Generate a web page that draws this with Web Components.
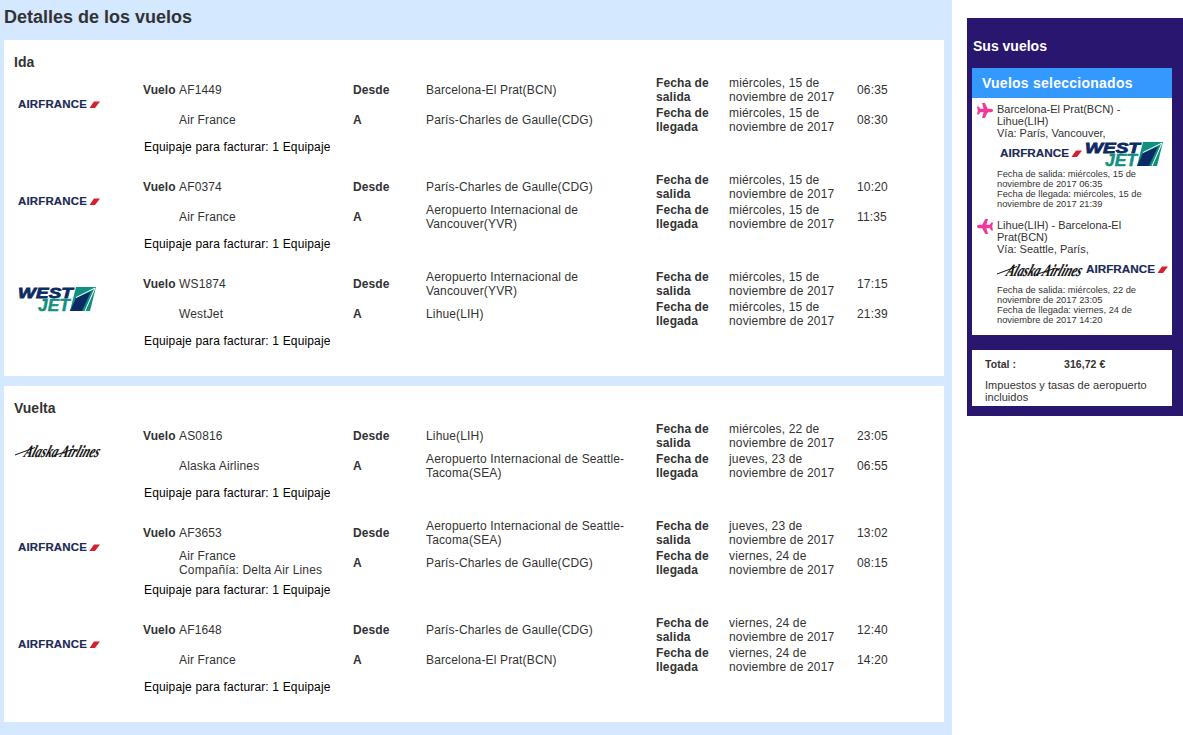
<!DOCTYPE html>
<html lang="es">
<head>
<meta charset="utf-8">
<title>Detalles de los vuelos</title>
<style>
  html, body { margin: 0; padding: 0; background: #fff; }
  body { font-family: "Liberation Sans", Arial, sans-serif; font-size: 12px; color: #333; }
  .page { display: flex; align-items: flex-start; }
</style>
</head>
<body>
<div class="page">
  <flight-details heading="Detalles de los vuelos">
    <flight-card heading="Ida">
      <flight-row logo="airfrance" code="AF1449" carrier="Air France"
        origin="Barcelona-El Prat(BCN)" dest="París-Charles de Gaulle(CDG)"
        dep-date="miércoles, 15 de noviembre de 2017" dep-time="06:35"
        arr-date="miércoles, 15 de noviembre de 2017" arr-time="08:30"></flight-row>
      <flight-row logo="airfrance" code="AF0374" carrier="Air France"
        origin="París-Charles de Gaulle(CDG)" dest="Aeropuerto Internacional de Vancouver(YVR)"
        dep-date="miércoles, 15 de noviembre de 2017" dep-time="10:20"
        arr-date="miércoles, 15 de noviembre de 2017" arr-time="11:35"></flight-row>
      <flight-row logo="westjet" code="WS1874" carrier="WestJet"
        origin="Aeropuerto Internacional de Vancouver(YVR)" dest="Lihue(LIH)"
        dep-date="miércoles, 15 de noviembre de 2017" dep-time="17:15"
        arr-date="miércoles, 15 de noviembre de 2017" arr-time="21:39"></flight-row>
    </flight-card>
    <flight-card heading="Vuelta">
      <flight-row logo="alaska" code="AS0816" carrier="Alaska Airlines"
        origin="Lihue(LIH)" dest="Aeropuerto Internacional de Seattle-Tacoma(SEA)"
        dep-date="miércoles, 22 de noviembre de 2017" dep-time="23:05"
        arr-date="jueves, 23 de noviembre de 2017" arr-time="06:55"></flight-row>
      <flight-row logo="airfrance" code="AF3653" carrier="Air France" operator="Compañía: Delta Air Lines"
        origin="Aeropuerto Internacional de Seattle-Tacoma(SEA)" dest="París-Charles de Gaulle(CDG)"
        dep-date="jueves, 23 de noviembre de 2017" dep-time="13:02"
        arr-date="viernes, 24 de noviembre de 2017" arr-time="08:15"></flight-row>
      <flight-row logo="airfrance" code="AF1648" carrier="Air France"
        origin="París-Charles de Gaulle(CDG)" dest="Barcelona-El Prat(BCN)"
        dep-date="viernes, 24 de noviembre de 2017" dep-time="12:40"
        arr-date="viernes, 24 de noviembre de 2017" arr-time="14:20"></flight-row>
    </flight-card>
  </flight-details>

  <trip-summary>
    <route-item route="Barcelona-El Prat(BCN) - Lihue(LIH)" via="Vía: París, Vancouver,"
      logos="airfrance westjet"
      dep="Fecha de salida: miércoles, 15 de noviembre de 2017 06:35"
      arr="Fecha de llegada: miércoles, 15 de noviembre de 2017 21:39"></route-item>
    <route-item return route="Lihue(LIH) - Barcelona-El Prat(BCN)" via="Vía: Seattle, París,"
      logos="alaska airfrance"
      dep="Fecha de salida: miércoles, 22 de noviembre de 2017 23:05"
      arr="Fecha de llegada: viernes, 24 de noviembre de 2017 14:20"></route-item>
  </trip-summary>
</div>

<script>
// logos are svg with real <text> for the lettering
const LOGOS = {
  airfrance: `
    <svg width="85" height="30" viewBox="0 0 85 30">
      <text x="2" y="18" font-family="Liberation Sans" font-weight="700" font-size="10" fill="#1c2a56"
        stroke="#1c2a56" stroke-width=".15" textLength="69" lengthAdjust="spacingAndGlyphs">AIRFRANCE</text>
      <path d="M78 11.500H84L79 18H73.500z" fill="#d5202e"/>
    </svg>`,
  westjet: `
    <svg width="84" height="30" viewBox="0 0 84 30">
      <path d="M60 3H80L74 27H54z" fill="#12907f"/>
      <path d="M60 14 75 7.500 66 27H54z" fill="#0c2a64"/>
      <path d="M60 13.500 79 4 69 27" fill="none" stroke="#fff" stroke-width="1"/>
      <text font-family="Liberation Sans" font-weight="700" font-style="italic">
        <tspan x="2" y="13.500" font-size="15.500" fill="#0c2a64" stroke="#0c2a64" stroke-width=".8"
          textLength="55" lengthAdjust="spacingAndGlyphs">WEST</tspan>
        <tspan x="22" y="27" font-size="16.500" fill="#12907f" stroke="#12907f" stroke-width=".5"
          textLength="32" lengthAdjust="spacingAndGlyphs">JET</tspan>
      </text>
    </svg>`,
  alaska: `
    <svg width="86" height="30" viewBox="0 0 86 30">
      <path d="M-1 19 19 11.500M38 19.500 58 13" stroke="#111" stroke-width="1" fill="none"/>
      <g transform="skewX(-20)">
        <text x="15" y="21.500" font-family="Liberation Serif" font-style="italic" font-weight="700" font-size="17"
          fill="#111" stroke="#111" stroke-width=".2" textLength="75" lengthAdjust="spacingAndGlyphs">Alaska Airlines</text>
      </g>
    </svg>`
};

class AirlineLogo extends HTMLElement {
  connectedCallback() {
    if (this.shadowRoot) return;
    this.attachShadow({ mode: 'open' });
    this.shadowRoot.innerHTML = `
      <style>
        :host { display: block; line-height: 0; }
        svg { overflow: visible; }
      </style>
      ${LOGOS[this.getAttribute('name')] || ''}
    `;
  }
}
customElements.define('airline-logo', AirlineLogo);

class FlightDetails extends HTMLElement {
  connectedCallback() {
    if (this.shadowRoot) return;
    this.attachShadow({ mode: 'open' });
    this.shadowRoot.innerHTML = `
      <style>
        :host {
          display: block;
          flex: 0 0 952px;
          box-sizing: border-box;
          min-height: 735px;
          padding: 0 8px 13px 4px;
          background: #d4e8ff;
        }
        h1 {
          margin: 0;
          height: 40px;
          padding-top: 7px;
          box-sizing: border-box;
          font-size: 18px;
          line-height: 20px;
          font-weight: 700;
          color: #333;
        }
        .cards { display: flex; flex-direction: column; gap: 10px; }
      </style>
      <h1>${this.getAttribute('heading')}</h1>
      <div class="cards"><slot></slot></div>
    `;
  }
}
customElements.define('flight-details', FlightDetails);

class FlightCard extends HTMLElement {
  connectedCallback() {
    if (this.shadowRoot) return;
    this.attachShadow({ mode: 'open' });
    this.shadowRoot.innerHTML = `
      <style>
        :host {
          display: block;
          box-sizing: border-box;
          height: 336px;
          background: #fff;
        }
        h2 {
          margin: 0;
          height: 35px;
          padding: 14px 0 0 10px;
          box-sizing: border-box;
          font-size: 14px;
          line-height: 16px;
          font-weight: 700;
          color: #333;
        }
      </style>
      <h2>${this.getAttribute('heading')}</h2>
      <slot></slot>
    `;
  }
}
customElements.define('flight-card', FlightCard);

class FlightRow extends HTMLElement {
  connectedCallback() {
    if (this.shadowRoot) return;
    const a = n => this.getAttribute(n) || '';
    const operator = a('operator') ? `<br>${a('operator')}` : '';
    this.attachShadow({ mode: 'open' });
    this.shadowRoot.innerHTML = `
      <style>
        :host { display: block; height: 97px; font-size: 12px; line-height: 14px; letter-spacing: .15px; color: #333; }
        .grid {
          display: grid;
          grid-template-columns: 139px 36px 174px 73px 230px 73px 128px 1fr;
          grid-template-rows: 30px 30px auto;
          align-items: center;
        }
        .logo { grid-row: 1 / 3; padding-left: 12px; }
        b { font-weight: 700; letter-spacing: .1px; }
        .bag { grid-column: 2 / 6; padding: 5px 0 0 1px; color: #000; }
      </style>
      <div class="grid">
        <div class="logo"><airline-logo name="${a('logo')}"></airline-logo></div>
        <b>Vuelo</b><div>${a('code')}</div>
        <b>Desde</b><div>${a('origin')}</div>
        <b>Fecha de salida</b><div>${a('dep-date')}</div><div>${a('dep-time')}</div>
        <div></div><div>${a('carrier')}${operator}</div>
        <b>A</b><div>${a('dest')}</div>
        <b>Fecha de llegada</b><div>${a('arr-date')}</div><div>${a('arr-time')}</div>
        <div class="bag">Equipaje para facturar: 1 Equipaje</div>
      </div>
    `;
  }
}
customElements.define('flight-row', FlightRow);

class TripSummary extends HTMLElement {
  connectedCallback() {
    if (this.shadowRoot) return;
    this.attachShadow({ mode: 'open' });
    this.shadowRoot.innerHTML = `
      <style>
        :host {
          display: block;
          flex: 0 0 216px;
          box-sizing: border-box;
          height: 398px;
          margin: 18px 0 0 15px;
          padding: 0 11px 0 5px;
          background: #28166f;
        }
        h2 {
          margin: 0;
          height: 50px;
          padding: 20px 0 0 1px;
          box-sizing: border-box;
          font-size: 14px;
          line-height: 16px;
          font-weight: 700;
          color: #fff;
        }
        h3 {
          margin: 0;
          height: 30px;
          padding-left: 10px;
          background: #3399ff;
          font-size: 14px;
          line-height: 30px;
          font-weight: 700;
          letter-spacing: .25px;
          color: #fff;
        }
        .routes {
          display: flex;
          flex-direction: column;
          gap: 10px;
          height: 237px;
          box-sizing: border-box;
          padding-top: 5px;
          background: #fff;
        }
        .total {
          box-sizing: border-box;
          height: 56px;
          margin-top: 15px;
          padding: 8px 13px 0;
          background: #fff;
          font-size: 11px;
          line-height: 12px;
          letter-spacing: .05px;
          color: #333;
        }
        .sum { display: grid; grid-template-columns: 79px 1fr; font-size: 10.500px; font-weight: 700; margin-bottom: 9px; }
      </style>
      <h2>Sus vuelos</h2>
      <h3>Vuelos seleccionados</h3>
      <div class="routes"><slot></slot></div>
      <div class="total">
        <div class="sum"><span>Total :</span><span>316,72 €</span></div>
        <div>Impuestos y tasas de aeropuerto incluidos</div>
      </div>
    `;
  }
}
customElements.define('trip-summary', TripSummary);

class RouteItem extends HTMLElement {
  connectedCallback() {
    if (this.shadowRoot) return;
    const a = n => this.getAttribute(n) || '';
    const logos = a('logos').split(' ').map(l => `<airline-logo name="${l}"></airline-logo>`).join('');
    this.attachShadow({ mode: 'open' });
    this.shadowRoot.innerHTML = `
      <style>
        :host {
          display: grid;
          grid-template-columns: 20px 1fr;
          height: 106px;
          padding-left: 5px;
          color: #333;
        }
        svg.plane { ${this.hasAttribute('return') ? 'transform: scaleX(-1);' : ''} }
        .route { font-size: 11px; line-height: 12px; width: 140px; height: 36px; }
        .logos { display: flex; height: 30px; margin-left: 1px; }
        .dates { font-size: 9.300px; line-height: 10px; width: 150px; }
      </style>
      <svg class="plane" width="16" height="15" viewBox="0 0 16 15">
        <path d="M16 7.500C16 6.500 15 5.800 14 5.800H10.800L7.800 0H5L6.600 5.800H3.200L1.800 3.500H0L.8 7.500 0 11.500H1.800L3.200 9.200H6.600L5 15H7.800L10.800 9.200H14C15 9.200 16 8.500 16 7.500z" fill="#ef3a9c"/>
      </svg>
      <div>
        <div class="route">${a('route')}<br>${a('via')}</div>
        <div class="logos">${logos}</div>
        <div class="dates">${a('dep')}<br>${a('arr')}</div>
      </div>
    `;
  }
}
customElements.define('route-item', RouteItem);
</script>
</body>
</html>
